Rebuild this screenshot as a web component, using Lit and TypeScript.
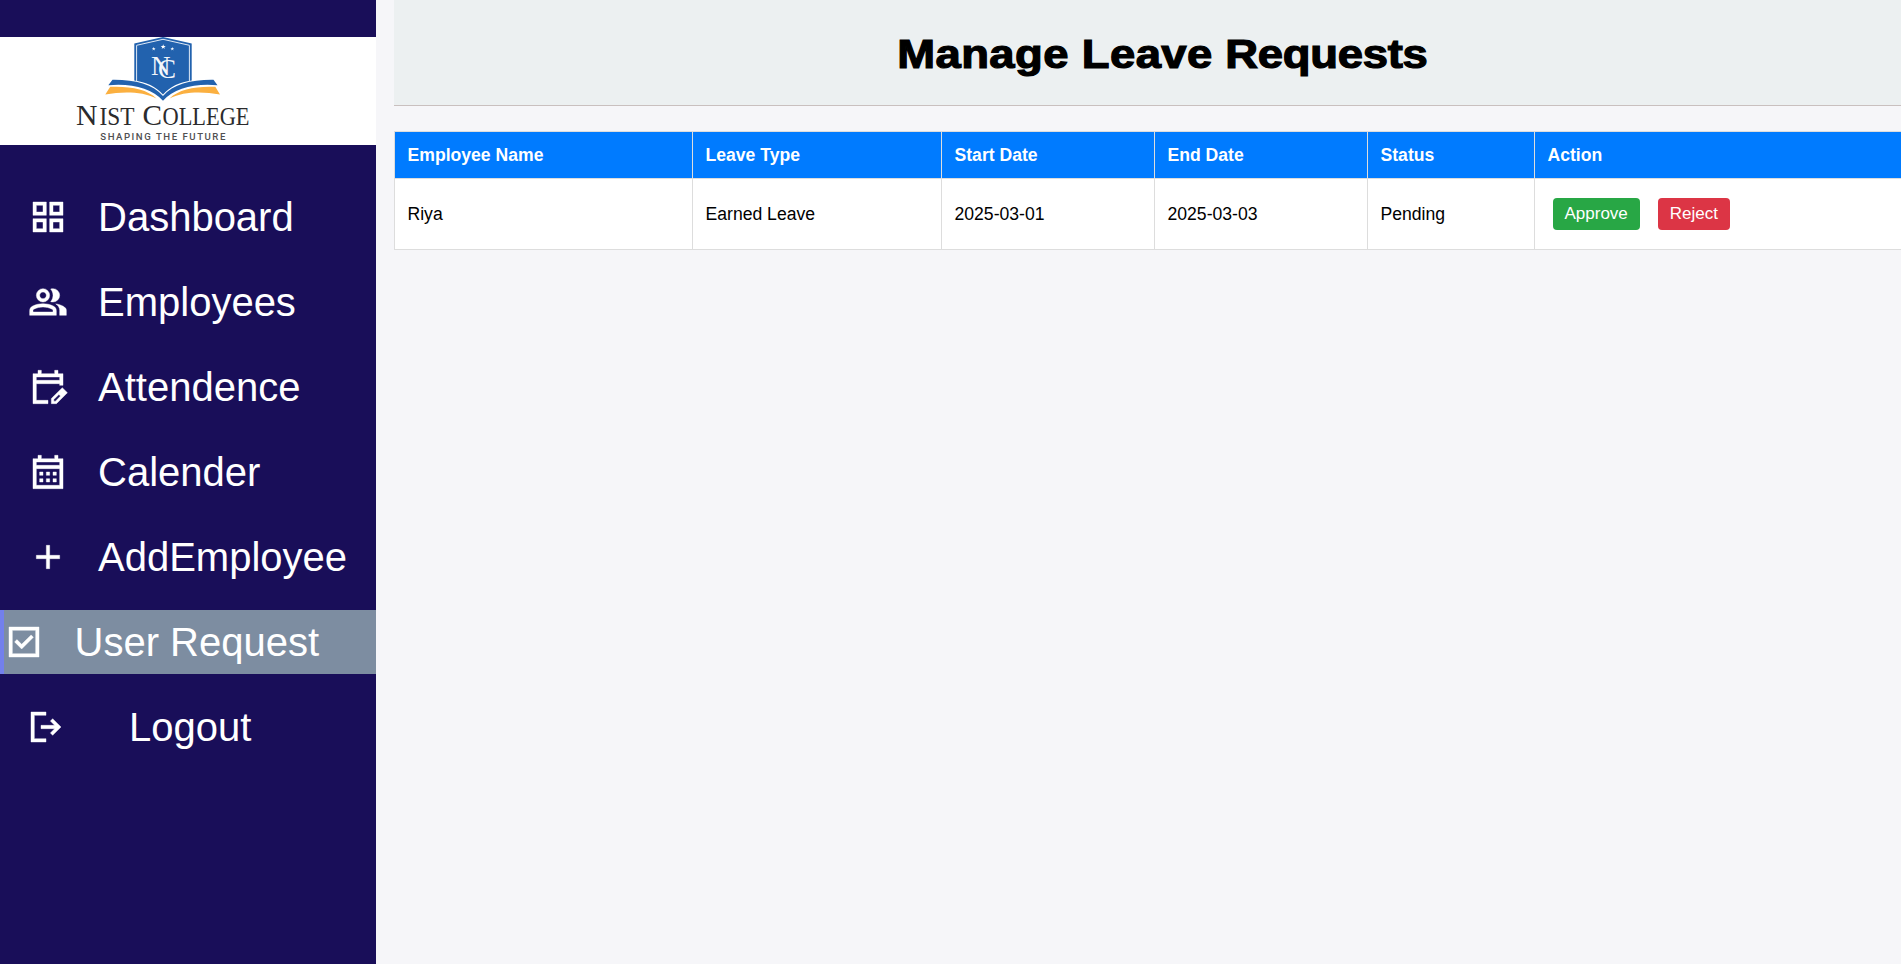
import { LitElement, html, css, svg } from "lit";
import { customElement } from "lit/decorators.js";
import { classMap } from "lit/directives/class-map.js";

const icons: Record<string, string> = {
  grid: "M3 11V3h8v8H3Zm0 10v-8h8v8H3Zm10-10V3h8v8h-8Zm0 10v-8h8v8h-8ZM5 9h4V5H5v4Zm10 0h4V5h-4v4Zm0 10h4v-4h-4v4ZM5 19h4v-4H5v4Z",
  group: "M1 20v-2.8q0-.85.438-1.563T2.6 14.55q1.55-.775 3.15-1.163T9 13q1.65 0 3.25.388t3.15 1.162q.725.375 1.163 1.088T17 17.2V20H1Zm18 0v-3q0-1.1-.613-2.113T16.65 13.15q1.275.15 2.4.513t2.1.887q.9.5 1.375 1.113T23 17v3h-4ZM9 12q-1.65 0-2.825-1.175T5 8q0-1.65 1.175-2.825T9 4q1.65 0 2.825 1.175T13 8q0 1.65-1.175 2.825T9 12Zm10-4q0 1.65-1.175 2.825T15 12q-.275 0-.7-.063t-.7-.137q.675-.8 1.038-1.775T15 8q0-1.05-.363-2.025T13.6 4.2q.35-.125.7-.163T15 4q1.65 0 2.825 1.175T19 8ZM3 18h12v-.8q0-.275-.138-.5t-.362-.35q-1.35-.675-2.725-1.013T9 15q-1.4 0-2.775.337T3.5 16.35q-.225.125-.363.35T3 17.2v.8Zm6-8q.825 0 1.413-.588T11 8q0-.825-.588-1.413T9 6q-.825 0-1.413.588T7 8q0 .825.588 1.413T9 10Z",
  edit: "M3 22V4h3V2h2v2h8V2h2v2h3v7h-2v-1H5v10h7v2H3Zm2-14h14V6H5v2Zm9 14v-3.075l6.575-6.55 3.075 3.05L17.075 22H14Zm1.5-1.5h.95l3.025-3.05-.925-.95-3.05 3.05v.95Z",
  month: "M3 22V4h3V2h2v2h8V2h2v2h3v18H3Zm2-2h14V10H5v10ZM5 8h14V6H5v2Zm2 6v-2h2v2H7Zm4 0v-2h2v2h-2Zm4 0v-2h2v2h-2Zm-8 4v-2h2v2H7Zm4 0v-2h2v2h-2Zm4 0v-2h2v2h-2Z",
  add: "M11 13H5v-2h6V5h2v6h6v2h-6v6h-2v-6Z",
  check: "m10.6 16.2 7.05-7.05-1.4-1.4-5.65 5.65-2.85-2.85-1.4 1.4 4.25 4.25ZM3 21V3h18v18H3Zm2-2h14V5H5v14Z",
  logout: "M3 21V3h9v2H5v14h7v2H3Zm13-4-1.375-1.45 2.55-2.55H9v-2h8.175l-2.55-2.55L16 7l5 5-5 5Z",
};

interface NavItem { icon: string; label: string; active?: boolean; last?: boolean }

const nav: NavItem[] = [
  { icon: "grid", label: "Dashboard" },
  { icon: "group", label: "Employees" },
  { icon: "edit", label: "Attendence" },
  { icon: "month", label: "Calender" },
  { icon: "add", label: "AddEmployee" },
  { icon: "check", label: "User Request", active: true },
  { icon: "logout", label: "Logout", last: true },
];

@customElement("college-logo")
class CollegeLogo extends LitElement {
  static styles = css`
    :host { display: block; height: 108px; background: #fff; }
    .art { display: block; }
    .name { font-family: "Liberation Serif", serif; fill: #2b2b2d; }
    .mono { font-family: "Liberation Serif", serif; fill: #f2f6fb; font-size: 27px; }
    .tag { font-family: Roboto, sans-serif; font-weight: 500; fill: #505052; font-size: 9.600px; }
  `;
  render() {
    const star = (x: number, y: number, r: number) => svg`
      <path fill="#fff" transform="translate(${x} ${y}) scale(${r})"
        d="M0-1 .26-.3 1-.3 .42.15 .6.85 0 .42-.6.85-.42.15-1-.3-.26-.3Z"/>`;
    return html`
      <svg class="art" width="330" height="108" viewBox="0 37 330 108">
        <path fill="#2262ae" d="M163 37 191.700 43.500V84L163 97 134.300 84V43.500Z"/>
        <path fill="none" stroke="#dfe9f5" stroke-width="1" d="M136.600 84V45.300L163 39.300 189.400 45.300V84"/>
        <path fill="#fff" d="M134 80.500C146 82 156 86.500 163 94.500 170 86.500 180 82 192 80.500V88L163 99 134 88Z"/>
        <path fill="#2262ae" d="M112.500 79.800C134 79.500 153 84 163 96 173 84 192 79.500 213.500 79.800L217.500 85.300C195 83 174 88.500 163 100.700 152 88.500 131 83 108.300 85.300Z"/>
        <path fill="#2262ae" d="M139 78V80.500C150 82.500 158 87 163 93 168 87 176 82.500 187 80.500V78Z"/>
        <path fill="#fbb040" d="M110.200 86.800C130 86 147 89 156.500 98.500 142 91.500 123 91.500 105.300 94.600Z"/>
        <path fill="#fbb040" d="M215.300 86.800C196 86 179 89 169.500 98.500 184 91.500 202 91.500 220 94.600Z"/>
        ${star(153.7, 48.8, 1.9)}${star(163.2, 46.8, 2.5)}${star(172.3, 48.8, 1.9)}
        <text class="mono" x="151 158" y="74.500 78">NC</text>
        <text class="name" x="76" y="124.500" font-size="28.500" textLength="21.500" lengthAdjust="spacingAndGlyphs">N</text>
        <text class="name" x="99.500" y="124.500" font-size="25" textLength="35" lengthAdjust="spacingAndGlyphs">IST</text>
        <text class="name" x="142.500" y="124.500" font-size="28.500" textLength="19.500" lengthAdjust="spacingAndGlyphs">C</text>
        <text class="name" x="162.500" y="124.500" font-size="25" textLength="87" lengthAdjust="spacingAndGlyphs">OLLEGE</text>
        <text class="tag" x="100.300" y="139.900" textLength="125">SHAPING THE FUTURE</text>
      </svg>`;
  }
}

@customElement("app-root")
class AppRoot extends LitElement {
  static styles = css`
    :host { display: flex; width: 100%; height: 964px; overflow: hidden; background: #f6f6f9; color: #000; font-family: "Liberation Sans", Arial, sans-serif; }
    .side { flex: none; width: 376px; background: #190e59; padding-top: 37px; box-sizing: border-box; }
    .nav { display: flex; flex-direction: column; gap: 21px; margin-top: 40px; }
    .item { display: flex; align-items: center; height: 64px; padding-left: 28px; gap: 30px; color: #fff; font-size: 40px; white-space: nowrap; box-sizing: border-box; }
    .item.active { background: #7d8da1; border-left: 4px solid #7380ec; padding-left: 0; gap: 30.500px; }
    .item.last { padding-left: 26px; gap: 63px; }
    .glyph { flex: none; width: 40px; height: 40px; fill: currentColor; stroke: currentColor; stroke-width: 0.25px; }
    .main { flex: none; width: 1537px; margin-left: 18px; }
    .head { height: 106px; box-sizing: border-box; border-bottom: 1px solid #c9c0bf; background: #ecf0f1; display: flex; align-items: center; justify-content: center; padding-top: 2px; }
    .title { margin: 0; font-size: 40px; line-height: 46px; font-weight: 700; transform: scaleX(1.136); -webkit-text-stroke: 1.200px #000; white-space: nowrap; }
    .wide { letter-spacing: 0.350px; }
    .tight { letter-spacing: -0.250px; }
    .table { margin-top: 25px; width: 1537px; border-collapse: collapse; table-layout: fixed; background: #fff; font-size: 17.600px; }
    .cell { border: 1px solid #ddd; padding: 0 12px 0 12.500px; text-align: left; height: 70px; }
    .cell.th { background: #007bff; color: #fff; height: 47px; font-weight: 700; box-sizing: border-box; }
    .c1 { width: 298px; } .c2 { width: 249px; } .c3 { width: 213px; } .c4 { width: 213px; } .c5 { width: 167px; }
    .acts { display: flex; gap: 18px; padding-left: 5px; }
    .btn { border: 0; border-radius: 4px; height: 32px; padding: 0 12px; color: #fff; font: 17px "Liberation Sans", Arial, sans-serif; }
    .ok { background: #28a745; }
    .no { background: #dc3545; }
  `;
  render() {
    const heads = ["Employee Name", "Leave Type", "Start Date", "End Date", "Status", "Action"];
    const row = ["Riya", "Earned Leave", "2025-03-01", "2025-03-03", "Pending"];
    return html`
      <aside class="side">
        <college-logo></college-logo>
        <nav class="nav">
          ${nav.map((n) => html`
            <div class=${classMap({ item: true, active: !!n.active, last: !!n.last })}>
              <svg class="glyph" viewBox="0 0 24 24"><path d=${icons[n.icon]}></path></svg>
              <span>${n.label}</span>
            </div>`)}
        </nav>
      </aside>
      <main class="main">
        <header class="head"><h1 class="title"><span class="wide">Manage Leave</span> <span class="tight">Requests</span></h1></header>
        <table class="table">
          <thead><tr>${heads.map((h, i) => html`<th class="cell th c${i + 1}">${h}</th>`)}</tr></thead>
          <tbody><tr>
            ${row.map((v) => html`<td class="cell">${v}</td>`)}
            <td class="cell"><div class="acts"><button class="btn ok">Approve</button><button class="btn no">Reject</button></div></td>
          </tr></tbody>
        </table>
      </main>`;
  }
}
